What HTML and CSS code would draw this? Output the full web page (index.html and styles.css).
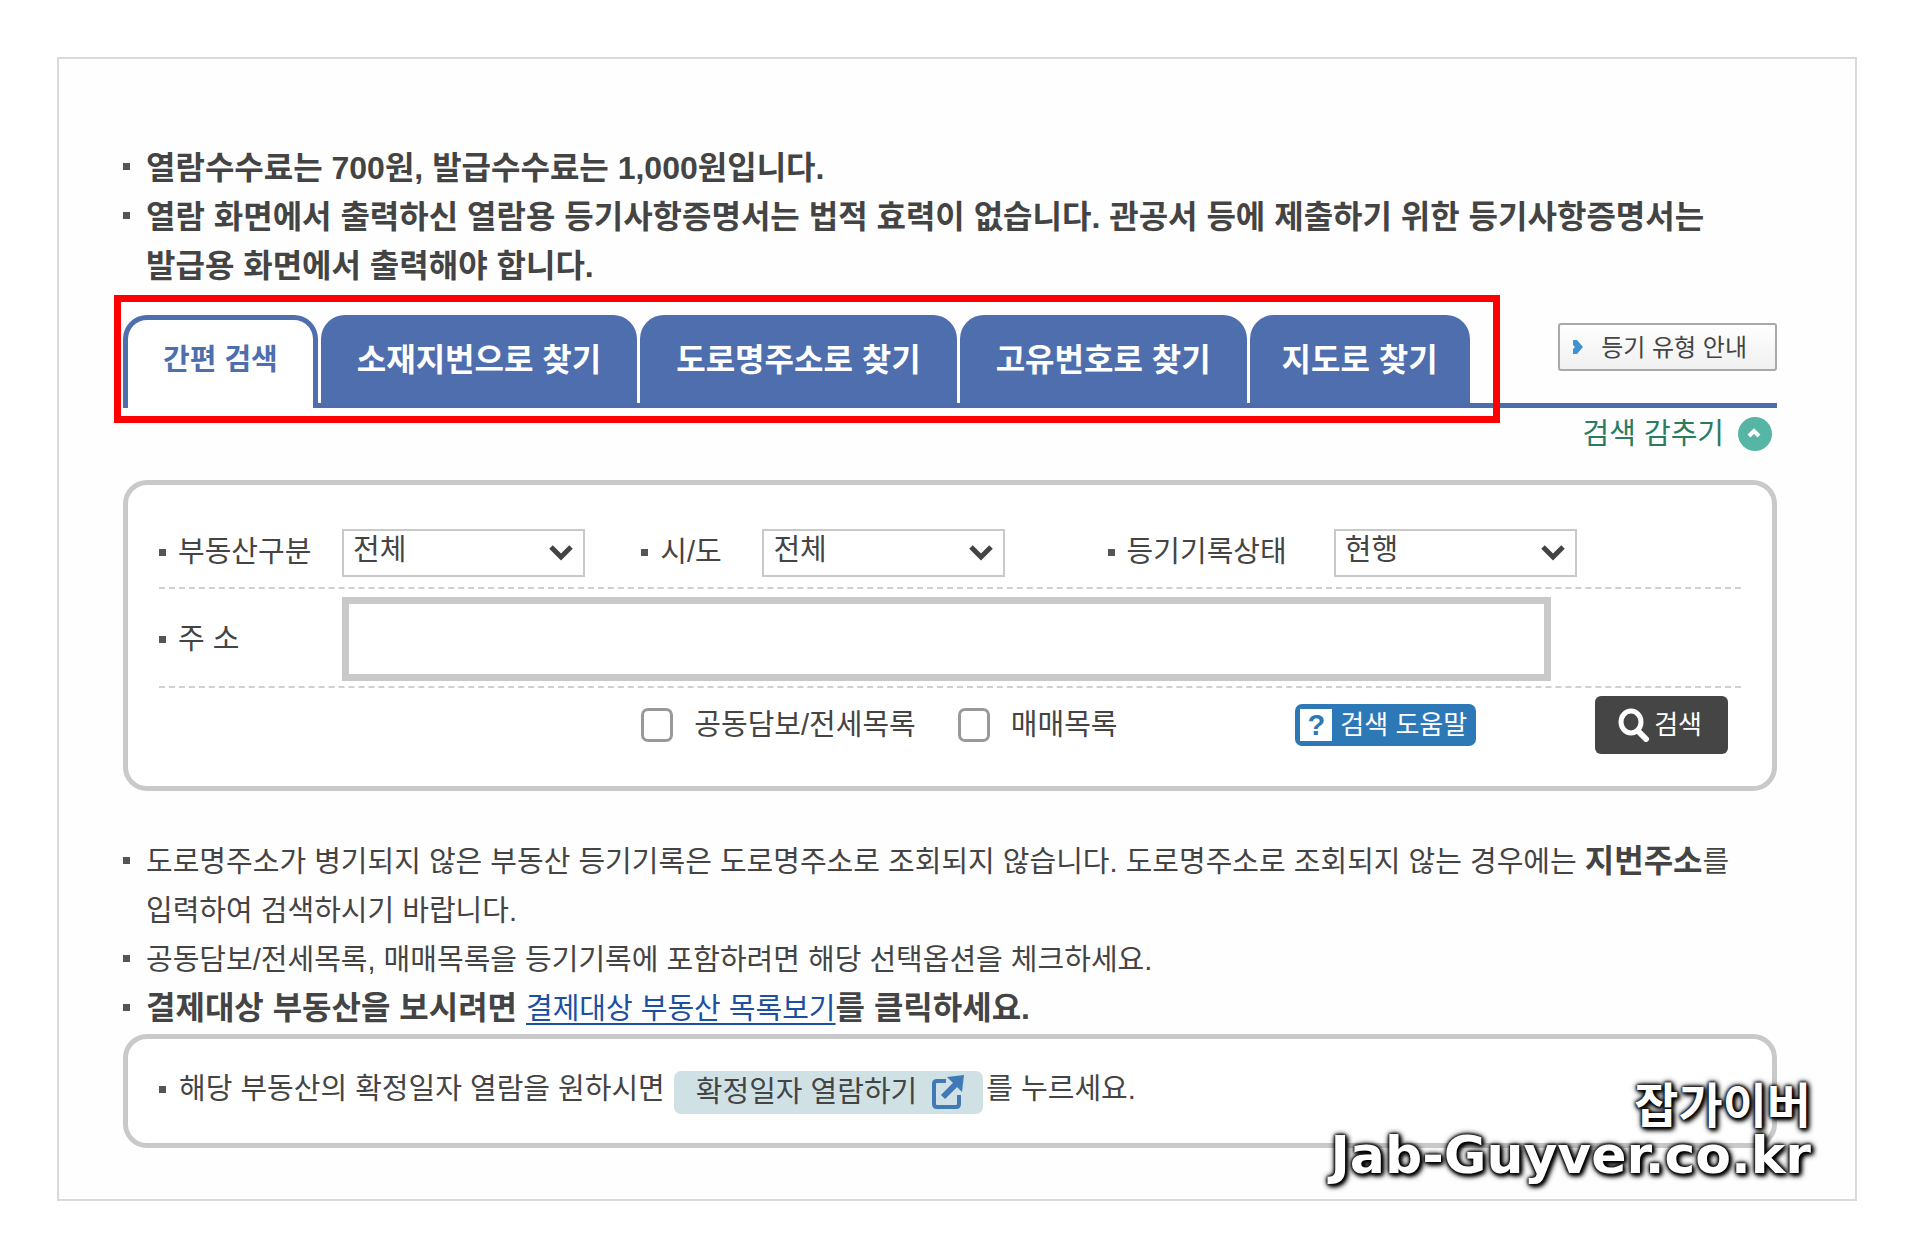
FILE: index.html
```html
<!DOCTYPE html>
<html lang="ko">
  <head>
    <meta charset="utf-8">
    <title>부동산 등기 열람/발급</title>
    <link rel="stylesheet" href="styles.css">
  </head>
  <body>
    <div class="frame">

      <ul class="notice notice_top">
        <li>열람수수료는 700원, 발급수수료는 1,000원입니다.</li>
        <li>열람 화면에서 출력하신 열람용 등기사항증명서는 법적 효력이 없습니다. 관공서 등에 제출하기 위한 등기사항증명서는 발급용 화면에서 출력해야 합니다.</li>
      </ul>

      <div class="tab_bar">
        <nav class="tabs">
          <a href="#simple" class="tab on">간편 검색</a>
          <a href="#lot" class="tab">소재지번으로 찾기</a>
          <a href="#road" class="tab">도로명주소로 찾기</a>
          <a href="#number" class="tab">고유번호로 찾기</a>
          <a href="#map" class="tab tab_map">지도로 찾기</a>
        </nav>
        <button type="button" class="btn_guide">
          <svg width="12" height="14" viewBox="0 0 12 14"><path d="M1 0h4l6 7-6 7H1V9l2-2-2-2z" fill="#3e93d0"/></svg>
          등기 유형 안내
        </button>
      </div>

      <div class="toggle_row">
        <button type="button" class="btn_toggle">
          검색 감추기
          <svg width="34" height="34" viewBox="0 0 34 34"><circle cx="17" cy="17" r="17" fill="#56b5a5"/><path d="M11 19l5-5 5 5" fill="none" stroke="#fff" stroke-width="4"/></svg>
        </button>
      </div>

      <form class="search box">
        <div class="row row_select">
          <label class="name" for="kind">부동산구분</label>
          <span class="pick">
            <select id="kind"><option>전체</option></select>
            <svg width="24" height="16" viewBox="0 0 24 16"><path d="M2 2l10 10L22 2" fill="none" stroke="#444" stroke-width="5"/></svg>
          </span>
          <label class="name" for="sido">시/도</label>
          <span class="pick">
            <select id="sido"><option>전체</option></select>
            <svg width="24" height="16" viewBox="0 0 24 16"><path d="M2 2l10 10L22 2" fill="none" stroke="#444" stroke-width="5"/></svg>
          </span>
          <label class="name" for="state">등기기록상태</label>
          <span class="pick">
            <select id="state"><option>현행</option></select>
            <svg width="24" height="16" viewBox="0 0 24 16"><path d="M2 2l10 10L22 2" fill="none" stroke="#444" stroke-width="5"/></svg>
          </span>
        </div>
        <div class="row row_addr">
          <label class="name" for="addr">주 소</label>
          <input type="text" id="addr" class="addr">
        </div>
        <div class="row row_option">
          <div class="checks">
            <label><input type="checkbox" name="joint">공동담보/전세목록</label>
            <label><input type="checkbox" name="sale">매매목록</label>
          </div>
          <div class="buttons">
            <button type="button" class="btn_help"><b>?</b>검색 도움말</button>
            <button type="submit" class="btn_search">
              <svg width="32" height="34" viewBox="0 0 32 34"><ellipse cx="13" cy="14" rx="10" ry="11" fill="none" stroke="#fff" stroke-width="5"/><path d="M20 23l8 8" stroke="#fff" stroke-width="6" stroke-linecap="round"/></svg>
              검색
            </button>
          </div>
        </div>
      </form>

      <ul class="notice notice_bottom">
        <li>도로명주소가 병기되지 않은 부동산 등기기록은 도로명주소로 조회되지 않습니다. 도로명주소로 조회되지 않는 경우에는 <b>지번주소</b>를 입력하여 검색하시기 바랍니다.</li>
        <li>공동담보/전세목록, 매매목록을 등기기록에 포함하려면 해당 선택옵션을 체크하세요.</li>
        <li><b>결제대상 부동산을 보시려면 </b><a href="#list">결제대상 부동산 목록보기</a><b>를 클릭하세요.</b></li>
      </ul>

      <div class="fixed_date box">
        <span class="name">해당 부동산의 확정일자 열람을 원하시면</span>
        <button type="button" class="btn_date">
          확정일자 열람하기
          <svg width="32" height="34" viewBox="0 0 32 34"><path d="M14 6H5Q2 6 2 9v20q0 3 3 3h19q3 0 3-3v-9" fill="none" stroke="#4079b5" stroke-width="4"/><path d="M11 22L25 8" stroke="#4079b5" stroke-width="6"/><path d="M15 2l17-2-2 17z" fill="#4079b5"/></svg>
        </button>
        <span>를 누르세요.</span>
      </div>

      <div class="watermark">
        <span>잡가이버</span>
        <span class="site">Jab-Guyver.co.kr</span>
      </div>
    </div>
  </body>
</html>
```
FILE: styles.css
```css
* {
  box-sizing: border-box;
}
body {
  margin: 0;
  padding: 57px;
  background: #fff;
  color: #444;
  font: 29px/49px "Liberation Sans", "Noto Sans CJK KR", sans-serif;
  word-break: keep-all;
}
button, select, input {
  margin: 0;
  font: inherit;
  color: inherit;
}
button {
  display: flex;
  align-items: center;
  border: 0;
  padding: 0;
  background: none;
  cursor: pointer;
  white-space: nowrap;
}
.frame {
  position: relative;
  padding: 85px 78px 51px 64px;
  border: 2px solid #d9d9d9;
  background: #fefefe;
}
.box {
  border: 5px solid #c9c9c9;
  border-radius: 24px;
  background: #fff;
}

/*notice lists*/
.notice {
  margin: 0;
  padding: 0;
  list-style: none;
}
.notice li {
  display: flow-root;
  padding-left: 23px;
}
.notice li::before {
  content: "";
  float: left;
  width: 7px;
  height: 7px;
  margin: 19px 0 0 -23px;
  background: #555;
}
.notice b {
  font-size: 32px;
  line-height: 1;
}
.notice a {
  color: #1c4fa0;
  text-underline-offset: 4px;
}
.notice_top {
  font-size: 32px;
  font-weight: bold;
}
.notice_bottom {
  margin-top: 47px;
}

/*tabs*/
.tab_bar {
  display: flex;
  justify-content: space-between;
  align-items: flex-start;
  margin-top: 24px;
  height: 93px;
  border-bottom: 5px solid #4d6cac;
}
.tabs {
  position: relative;
  display: flex;
  gap: 3px;
}
/*red highlight round the tabs*/
.tabs::after {
  content: "";
  position: absolute;
  inset: -20px -30px -15px -9px;
  border: 7px solid #f00;
  pointer-events: none;
}
.tab {
  height: 88px;
  padding: 0 36px;
  border-radius: 24px 24px 0 0;
  background: #4f6eae;
  color: #fff;
  font-size: 32px;
  font-weight: bold;
  line-height: 90px;
  text-decoration: none;
  white-space: nowrap;
}
.tab.on {
  height: 93px;
  padding: 0 35px;
  border: 5px solid #4f6eae;
  border-bottom: 0;
  background: #fff;
  color: #4f6eae;
  font-size: 29px;
  line-height: 80px;
}
.tab_map {
  padding: 0 32px;
}
.btn_guide {
  gap: 17px;
  height: 48px;
  margin-top: 8px;
  padding: 0 28px 0 12px;
  border: 2px solid #a9a9a9;
  border-radius: 3px;
  background: linear-gradient(#fff, #f0f0f0);
  font-size: 24px;
}
.toggle_row {
  display: flex;
  justify-content: flex-end;
  margin-top: 9px;
  padding-right: 5px;
}
.btn_toggle {
  gap: 14px;
  height: 34px;
  color: #2b7b5f;
}

/*search form*/
.search {
  margin-top: 29px;
  padding: 43px 31px 32px;
}
.name {
  display: flex;
  align-items: center;
  gap: 13px;
  white-space: nowrap;
}
.name::before {
  content: "";
  width: 7px;
  height: 7px;
  background: #555;
}
.row {
  display: grid;
}
.row .name {
  gap: 12px;
}
.row_select, .row_addr {
  border-bottom: 2px dashed #d0d0d0;
}
.row_select {
  grid-template-columns: 183fr 299fr 121fr 345fr 226fr 407fr;
  padding-bottom: 10px;
}
.row_addr {
  grid-template-columns: 183fr 1208fr 190fr;
  padding: 8px 0 5px;
}
.row_option {
  grid-template-columns: 482fr 1099fr;
  align-items: center;
  padding-top: 8px;
}
.pick {
  display: grid;
  align-items: center;
  width: 243px;
}
.pick select, .pick svg {
  grid-area: 1 / 1;
}
.pick svg {
  justify-self: end;
  margin-right: 12px;
  pointer-events: none;
}
.pick select {
  appearance: none;
  height: 48px;
  padding: 0 9px 6px;
  border: 2px solid #c9c9c9;
  border-radius: 0;
  background: #fff;
  line-height: 38px;
}
.addr {
  width: 100%;
  height: 84px;
  padding: 0 12px;
  border: 7px solid #c9c9c9;
  background: #fff;
}
.checks {
  grid-column: 2;
  grid-row: 1;
  display: flex;
  gap: 42px;
}
.checks label {
  display: flex;
  align-items: center;
  gap: 21px;
}
.checks input {
  appearance: none;
  width: 32px;
  height: 34px;
  border: 3px solid #999;
  border-radius: 7px;
  background: #fff;
}
.buttons {
  grid-column: 2;
  grid-row: 1;
  justify-self: end;
  display: flex;
  align-items: center;
  gap: 119px;
  margin-right: 13px;
}
.btn_help {
  gap: 8px;
  height: 42px;
  padding: 0 9px 0 5px;
  border-radius: 7px;
  background: #2d79b7;
  color: #fff;
  font-size: 26px;
}
.btn_help b {
  width: 32px;
  background: #fff;
  color: #2d79b7;
  font-size: 29px;
  line-height: 32px;
}
.btn_search {
  gap: 4px;
  height: 58px;
  padding: 0 26px 0 23px;
  border-radius: 6px;
  background: #454545;
  color: #fff;
  font-size: 26px;
}

/*fixed date box*/
.fixed_date {
  display: flex;
  align-items: center;
  height: 114px;
  padding: 0 31px 4px;
}
.btn_date {
  gap: 15px;
  height: 43px;
  margin: 6px 3px 0 9px;
  padding: 0 19px 0 22px;
  border-radius: 7px;
  background: #d0e1e6;
}

.watermark {
  position: absolute;
  right: 44px;
  bottom: 19px;
  display: flex;
  flex-direction: column;
  align-items: flex-end;
  color: #fff;
  font-size: 48px;
  font-weight: bold;
  text-shadow: 0 0 3px #000, 0 0 3px #000, 2px 2px 4px #000, 2px 2px 6px #000, 0 0 6px #000;
}
.site {
  font-family: "DejaVu Sans", sans-serif;
  font-size: 52px;
}
```
